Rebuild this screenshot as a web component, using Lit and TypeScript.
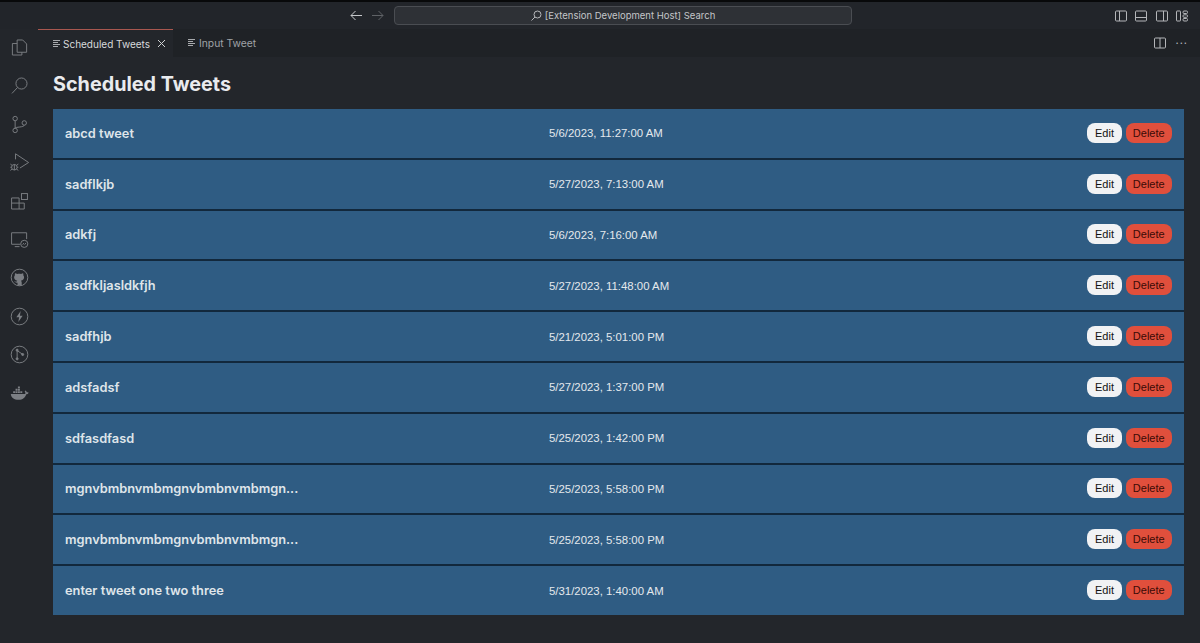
import { LitElement, html, css, svg } from 'lit';
import { customElement } from 'lit/decorators.js';

const tweets = [
  ['abcd tweet', '5/6/2023, 11:27:00 AM'],
  ['sadflkjb', '5/27/2023, 7:13:00 AM'],
  ['adkfj', '5/6/2023, 7:16:00 AM'],
  ['asdfkljasldkfjh', '5/27/2023, 11:48:00 AM'],
  ['sadfhjb', '5/21/2023, 5:01:00 PM'],
  ['adsfadsf', '5/27/2023, 1:37:00 PM'],
  ['sdfasdfasd', '5/25/2023, 1:42:00 PM'],
  ['mgnvbmbnvmbmgnvbmbnvmbmgn...', '5/25/2023, 5:58:00 PM'],
  ['mgnvbmbnvmbmgnvbmbnvmbmgn...', '5/25/2023, 5:58:00 PM'],
  ['enter tweet one two three', '5/31/2023, 1:40:00 AM'],
];

// activity bar icons, drawn on a 24 box
const activity = [
  svg`<path d="M9 2.500h7l5 5v10.500h-12z"/><path d="M9 7h-6v14.500h12v-3.500"/>`,
  svg`<circle cx="14.500" cy="9.500" r="7"/><path d="M9.500 14.500l-7 7.500"/>`,
  svg`<circle cx="6.500" cy="4.500" r="2.800"/><circle cx="6.500" cy="19.500" r="2.800"/><circle cx="18" cy="10" r="2.800"/><path d="M6.500 7.300v9.400M18 12.800c0 3-11.500 2-11.500 3.900"/>`,
  svg`<path d="M7 8v-7l16.500 11-11 7"/><circle cx="5.500" cy="18" r="3.500"/><path d="M5.500 14.500v7M.5 14l2 1.500M.5 22l2-1.500M.5 18h1.500M9 18h1.500M10.500 14l-2 1.500M10.500 22l-2-1.500"/>`,
  svg`<path d="M2 7.500h9.500v6.500h6.500v7.500h-16zM2 14h9.500v7.500"/><rect x="14.500" y="2" width="7.500" height="7.500"/>`,
  svg`<path d="M13 18h-11v-14.500h19v8"/><path d="M6 21h6"/><circle cx="18" cy="17.500" r="4.500"/><path d="M16 18.500l1.500-2M18.500 18.500l1.500-2"/>`,
  svg`<circle cx="12" cy="12" r="10.500"/><path fill="currentColor" stroke="none" d="M9.500 22v-3.500c-2.500.5-3.500-1-4-2 .8 0 1.500 1 2.500 1 .3-.8.8-1.200 1.200-1.500-2.500-.5-4-1.800-4-4.300 0-1 .4-2 1-2.700-.2-.8-.1-1.700.2-2.500 1 0 1.900.5 2.600 1 1.600-.4 3.400-.4 5 0 .7-.5 1.600-1 2.600-1 .3.8.4 1.700.2 2.500.6.700 1 1.700 1 2.700 0 2.500-1.500 3.800-4 4.300.6.500 1 1.200 1 2.200v3.800z"/>`,
  svg`<circle cx="12" cy="12" r="10.500"/><path fill="currentColor" stroke="none" d="M13.500 5l-5.500 8h3.500l-1 6 5.500-8h-3.500z"/>`,
  svg`<circle cx="12" cy="12" r="10.500"/><circle cx="9" cy="6.500" r="1.300" fill="currentColor"/><circle cx="9" cy="17.500" r="1.300" fill="currentColor"/><circle cx="16" cy="12" r="1.300" fill="currentColor"/><path d="M9 7v10M9 7l6.500 4.500"/>`,
  svg`<path fill="currentColor" stroke="none" d="M1 12.500h18.200c.5-1.200 0-2.500-.7-3.300l1-1c1 .6 1.500 1.500 1.700 2.300.8-.2 1.600-.1 2.300.4-.6 1.400-1.800 1.900-3 1.900-1.200 4.200-4.500 7-9.500 7-6 0-9.500-2.500-10-7.300zM4 9h2.500v2.500h-2.500zM7 9h2.500v2.500h-2.500zM10 9h2.500v2.500h-2.500zM13 9h2.500v2.500h-2.500zM7 6h2.500v2.500h-2.500zM10 6h2.500v2.500h-2.500zM10 3h2.500v2.500h-2.500z"/>`,
];

const tabIcon = html`<svg class="tab-icon" viewBox="0 0 10 10"><path d="M1 1.500h7M1 3.500h5M1 5.500h7M1 7.500h5"/></svg>`;

@customElement('app-root')
export class AppRoot extends LitElement {
  static styles = css`
    :host {
      display: flex;
      flex-direction: column;
      height: 643px;
      overflow: hidden;
      background: #23262b;
      font-family: Inter, 'Liberation Sans', sans-serif;
      color: #e8eaed;
    }
    .titlebar {
      height: 29px;
      box-sizing: border-box;
      border-top: 2px solid #08090a;
      display: flex;
      align-items: center;
      background: #22252a;
    }
    .nav {
      margin-left: 350px;
      display: flex;
      gap: 8px;
      width: 44px;
    }
    .nav svg {
      width: 13px;
      height: 13px;
      fill: none;
      stroke: #c6c8cb;
      stroke-width: 1;
    }
    .nav svg + svg {
      stroke: #5f6266;
    }
    .search {
      width: 458px;
      height: 19px;
      box-sizing: border-box;
      border: 1px solid #4a4d52;
      border-radius: 4px;
      background: #2e3136;
      display: flex;
      align-items: center;
      justify-content: center;
      gap: 3px;
      font-size: 9.500px;
      color: #c4c6c9;
    }
    .search svg {
      width: 11px;
      height: 11px;
      fill: none;
      stroke: #b5b7ba;
      stroke-width: 1;
    }
    .layout {
      margin-left: auto;
      margin-right: 12px;
      display: flex;
      gap: 8.500px;
    }
    .glyph {
      width: 12px;
      height: 12px;
      fill: none;
      stroke: #b4b6b9;
      stroke-width: 1;
    }
    .body {
      flex: 1;
      display: flex;
      min-height: 0;
    }
    .activity {
      width: 38px;
      box-sizing: border-box;
      padding-top: 9px;
      display: flex;
      flex-direction: column;
      align-items: center;
      gap: 19.400px;
      color: #7c7f84;
    }
    .activity svg {
      width: 19px;
      height: 19px;
      fill: none;
      stroke: currentColor;
      stroke-width: 1.200;
    }
    .main {
      flex: 1;
      min-width: 0;
      display: flex;
      flex-direction: column;
    }
    .tabs {
      height: 28px;
      display: flex;
      background: #1f2226;
    }
    .tab {
      display: flex;
      align-items: center;
      gap: 2px;
      padding: 0 7px 0 14px;
      font-size: 10.300px;
      color: #a0a2a6;
      white-space: nowrap;
    }
    .tab.active {
      width: 135px;
      box-sizing: border-box;
      background: #23262b;
      color: #d8dadc;
      border-top: 1px solid #a8574f;
      font-size: 10px;
      gap: 1px;
    }
    .tab-icon {
      width: 10px;
      height: 10px;
      fill: none;
      stroke: #a8aaad;
      stroke-width: 1;
    }
    .close {
      margin-left: auto;
      width: 9px;
      height: 9px;
      fill: none;
      stroke: #d0d2d4;
      stroke-width: 1;
    }
    .tab-actions {
      margin-left: auto;
      margin-right: 12px;
      display: flex;
      align-items: center;
      gap: 9px;
    }
    .dots {
      font-size: 11px;
      letter-spacing: 1px;
      color: #b4b6b9;
      line-height: 1;
    }
    .content {
      padding: 0 16px 0 15px;
    }
    h1 {
      margin: 0;
      height: 52px;
      padding-top: 2px;
      box-sizing: border-box;
      display: flex;
      align-items: center;
      font-size: 19.800px;
      font-weight: 700;
      color: #e9ebee;
    }
    .list {
      display: flex;
      flex-direction: column;
      background: #12283c;
    }
    .row {
      height: 48.800px;
      display: grid;
      grid-template-columns: 484px 1fr auto;
      align-items: center;
      padding: 0 12px;
      background: #2f5c83;
    }
    .row + .row {
      margin-top: 2px;
    }
    .name {
      font-size: 12.800px;
      font-weight: 600;
      color: #dfe5ea;
    }
    .date {
      font-family: 'Liberation Sans', Arial, sans-serif;
      font-size: 11.400px;
      color: #e4e9ed;
    }
    .actions {
      display: flex;
      gap: 3.500px;
      margin-top: -1px;
    }
    button {
      height: 20px;
      padding: 0;
      border: none;
      border-radius: 8px;
      font-family: 'Liberation Sans', Arial, sans-serif;
      font-size: 11px;
      color: #111;
    }
    .edit {
      width: 35px;
      background: #f1f2f4;
    }
    .delete {
      width: 46.500px;
      background: #e04f3c;
      color: #3a0b06;
    }
  `;

  render() {
    return html`
      <div class="titlebar">
        <div class="nav">
          <svg viewBox="0 0 13 13"><path d="M12 6.500h-11M5.500 2l-4.500 4.500 4.500 4.500"/></svg>
          <svg viewBox="0 0 13 13"><path d="M1 6.500h11M7.500 2l4.500 4.500-4.500 4.500"/></svg>
        </div>
        <div class="search">
          <svg viewBox="0 0 11 11"><circle cx="6.500" cy="4.500" r="3.500"/><path d="M4 7l-3.500 3.500"/></svg>
          <span>[Extension Development Host] Search</span>
        </div>
        <div class="layout">
          <svg class="glyph" viewBox="0 0 12 12"><rect x=".5" y="1" width="11" height="10" rx="1"/><path d="M4.500 1v10"/></svg>
          <svg class="glyph" viewBox="0 0 12 12"><rect x=".5" y="1" width="11" height="10" rx="1"/><path d="M.5 7.500h11"/></svg>
          <svg class="glyph" viewBox="0 0 12 12"><rect x=".5" y="1" width="11" height="10" rx="1"/><path d="M7.500 1v10"/></svg>
          <svg class="glyph" viewBox="0 0 12 12"><rect x=".5" y="1" width="4" height="10" rx=".5"/><rect x="7" y="1" width="4.500" height="2.500" rx="1"/><rect x="7" y="4.800" width="4.500" height="2.500" rx="1"/><rect x="7" y="8.500" width="4.500" height="2.500" rx="1"/></svg>
        </div>
      </div>
      <div class="body">
        <div class="activity">
          ${activity.map((icon) => html`<svg viewBox="0 0 24 24">${icon}</svg>`)}
        </div>
        <div class="main">
          <div class="tabs">
            <div class="tab active">
              ${tabIcon}<span>Scheduled Tweets</span>
              <svg class="close" viewBox="0 0 9 9"><path d="M1 1l7 7M8 1l-7 7"/></svg>
            </div>
            <div class="tab">${tabIcon}<span>Input Tweet</span></div>
            <div class="tab-actions">
              <svg class="glyph" viewBox="0 0 12 12"><rect x=".5" y="1" width="11" height="10" rx="1"/><path d="M6 1v10"/></svg>
              <span class="dots">···</span>
            </div>
          </div>
          <div class="content">
            <h1>Scheduled Tweets</h1>
            <div class="list">
              ${tweets.map(
                ([name, date]) => html`
                  <div class="row">
                    <span class="name">${name}</span>
                    <span class="date">${date}</span>
                    <div class="actions">
                      <button class="edit">Edit</button>
                      <button class="delete">Delete</button>
                    </div>
                  </div>
                `,
              )}
            </div>
          </div>
        </div>
      </div>
    `;
  }
}
